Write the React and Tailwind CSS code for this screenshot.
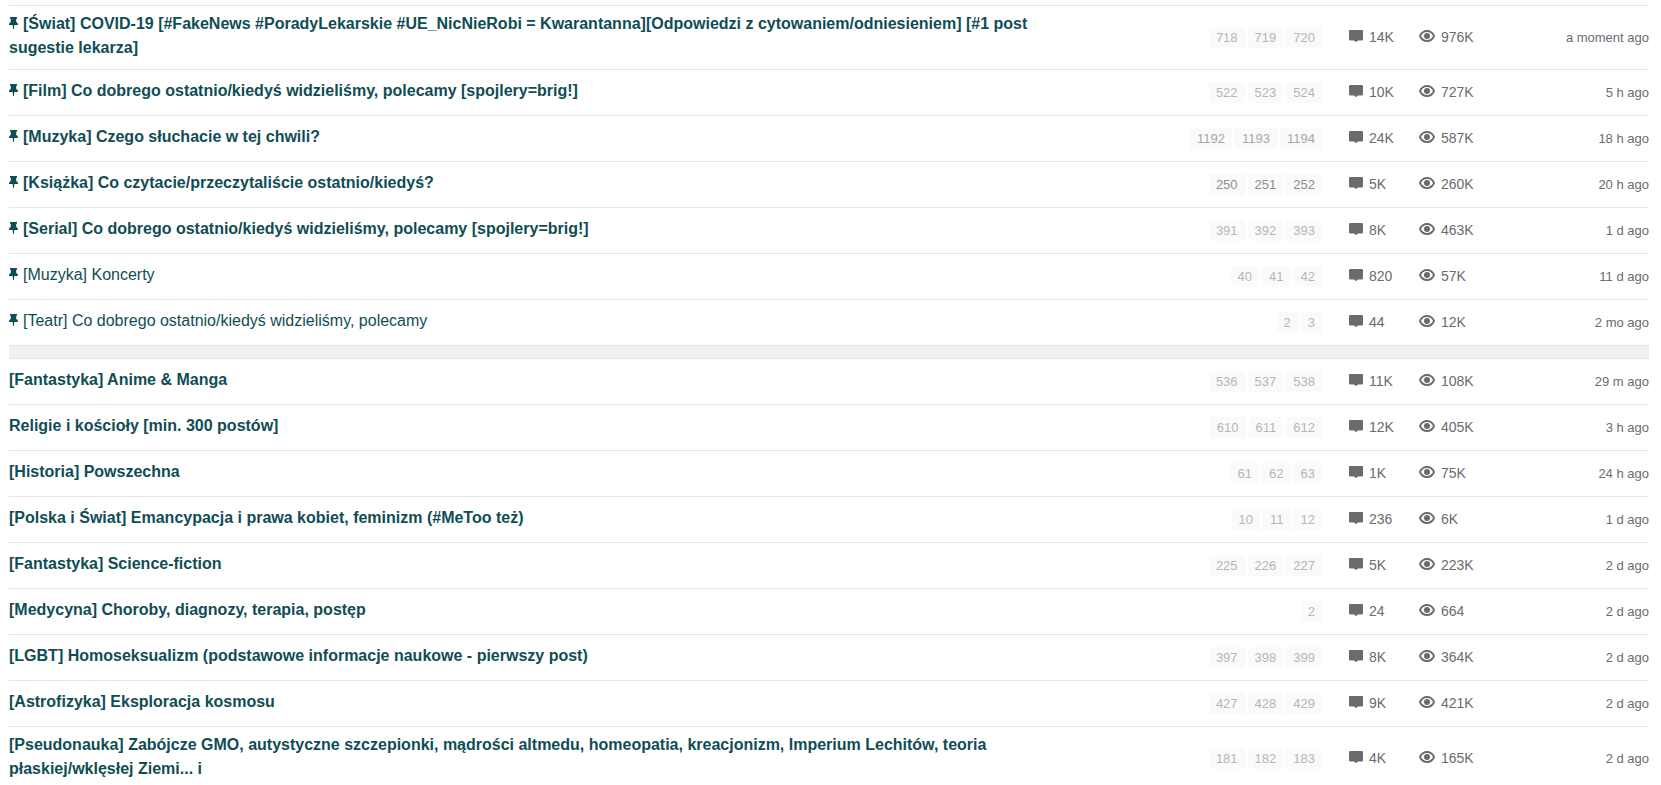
import React from 'react'
import clsx from 'clsx'

const pinned = [
  { title: '[Świat] COVID-19 [#FakeNews #PoradyLekarskie #UE_NicNieRobi = Kwarantanna][Odpowiedzi z cytowaniem/odniesieniem] [#1 post sugestie lekarza]', pages: [718, 719, 720], replies: '14K', views: '976K', time: 'a moment ago', unread: true },
  { title: '[Film] Co dobrego ostatnio/kiedyś widzieliśmy, polecamy [spojlery=brig!]', pages: [522, 523, 524], replies: '10K', views: '727K', time: '5 h ago', unread: true },
  { title: '[Muzyka] Czego słuchacie w tej chwili?', pages: [1192, 1193, 1194], replies: '24K', views: '587K', time: '18 h ago', unread: true, tone: 'text-[#a6a7a8]' },
  { title: '[Książka] Co czytacie/przeczytaliście ostatnio/kiedyś?', pages: [250, 251, 252], replies: '5K', views: '260K', time: '20 h ago', unread: true, tone: 'text-[#8b8d8e]' },
  { title: '[Serial] Co dobrego ostatnio/kiedyś widzieliśmy, polecamy [spojlery=brig!]', pages: [391, 392, 393], replies: '8K', views: '463K', time: '1 d ago', unread: true },
  { title: '[Muzyka] Koncerty', pages: [40, 41, 42], replies: '820', views: '57K', time: '11 d ago' },
  { title: '[Teatr] Co dobrego ostatnio/kiedyś widzieliśmy, polecamy', pages: [2, 3], replies: '44', views: '12K', time: '2 mo ago' },
]

const topics = [
  { title: '[Fantastyka] Anime & Manga', pages: [536, 537, 538], replies: '11K', views: '108K', time: '29 m ago', unread: true },
  { title: 'Religie i kościoły [min. 300 postów]', pages: [610, 611, 612], replies: '12K', views: '405K', time: '3 h ago', unread: true },
  { title: '[Historia] Powszechna', pages: [61, 62, 63], replies: '1K', views: '75K', time: '24 h ago', unread: true },
  { title: '[Polska i Świat] Emancypacja i prawa kobiet, feminizm (#MeToo też)', pages: [10, 11, 12], replies: '236', views: '6K', time: '1 d ago', unread: true },
  { title: '[Fantastyka] Science-fiction', pages: [225, 226, 227], replies: '5K', views: '223K', time: '2 d ago', unread: true },
  { title: '[Medycyna] Choroby, diagnozy, terapia, postęp', pages: [2], replies: '24', views: '664', time: '2 d ago', unread: true },
  { title: '[LGBT] Homoseksualizm (podstawowe informacje naukowe - pierwszy post)', pages: [397, 398, 399], replies: '8K', views: '364K', time: '2 d ago', unread: true },
  { title: '[Astrofizyka] Eksploracja kosmosu', pages: [427, 428, 429], replies: '9K', views: '421K', time: '2 d ago', unread: true },
  { title: '[Pseudonauka] Zabójcze GMO, autystyczne szczepionki, mądrości altmedu, homeopatia, kreacjonizm, Imperium Lechitów, teoria płaskiej/wklęsłej Ziemi... i', pages: [181, 182, 183], replies: '4K', views: '165K', time: '2 d ago', unread: true },
]

const PinIcon = () => (
  <svg viewBox="0 0 9 12" className="mr-[5px] inline-block h-3 w-[9px] align-baseline" fill="currentColor" aria-hidden="true">
    <path d="M1 0h7v1.500L7.200 2v3C8.400 5.500 9 6.400 9 8H5.300L4.900 12h-.8L3.700 8H0c0-1.600.6-2.500 1.800-3V2L1 1.500z" />
  </svg>
)

const CommentIcon = () => (
  <svg viewBox="0 0 14 12" className="mb-0.5 h-3 w-[14px]" fill="currentColor" aria-hidden="true">
    <path d="M1.200 0h11.600C13.600 0 14 .4 14 1.200v8c0 .8-.4 1.200-1.200 1.200H8.900L7.500 11.800c-.3.300-.7.300-1 0L5.100 10.400H1.200C.4 10.400 0 10 0 9.200v-8C0 .4.400 0 1.200 0z" />
  </svg>
)

const EyeIcon = () => (
  <svg viewBox="0 0 16 12" className="mb-0.5 h-3 w-4" fill="none" stroke="currentColor" aria-hidden="true">
    <path d="M.9 6C2.400 2.800 4.900 1 8 1s5.600 1.800 7.100 5C13.600 9.200 11.100 11 8 11S2.400 9.200.9 6z" strokeWidth="1.800" strokeLinejoin="round" />
    <circle cx="8" cy="6" r="3" fill="currentColor" stroke="none" />
  </svg>
)

const TopicRow = ({ topic, isPinned }) => (
  <li className="flex min-h-[46px] items-center border-t border-[#e3e5e7] pt-[6px] pb-[7px]">
    <div className="w-[65%] pb-0.5">
      <a href="#" className={clsx('text-base text-[#0f4d55] hover:underline', topic.unread && 'font-bold')}>
        {isPinned && <PinIcon />}
        {topic.title}
      </a>
    </div>

    {/* Last pages */}
    <div className="flex flex-1 justify-end gap-[3px]">
      {topic.pages.map((page) => (
        <a key={page} href="#" className={clsx('rounded-xs bg-[#fafafa] px-[7px] text-[13px] leading-[21px]', topic.tone || 'text-[#b5b6b7]')}>
          {page}
        </a>
      ))}
    </div>

    {/* Replies and views */}
    <div className="ml-[27px] flex w-[70px] items-center gap-[6px] text-sm">
      <CommentIcon />
      <span>{topic.replies}</span>
    </div>
    <div className="flex w-[70px] items-center gap-[6px] text-sm">
      <EyeIcon />
      <span>{topic.views}</span>
    </div>

    <time className="w-40 pt-0.5 text-right text-[13px] leading-5">{topic.time}</time>
  </li>
)

const App = () => {
  return (
    <main className="max-h-screen overflow-hidden bg-white pt-[5px] pr-3 pl-[9px] font-['Liberation_Sans',Arial,sans-serif] text-[#686c6f]">
      <ul>
        {pinned.map((topic) => (
          <TopicRow key={topic.title} topic={topic} isPinned />
        ))}
      </ul>
      <div className="h-[13px] border-t border-[#e3e5e7] bg-[#eef2f5]" />
      <ul>
        {topics.map((topic) => (
          <TopicRow key={topic.title} topic={topic} />
        ))}
      </ul>
    </main>
  )
}

export default App
